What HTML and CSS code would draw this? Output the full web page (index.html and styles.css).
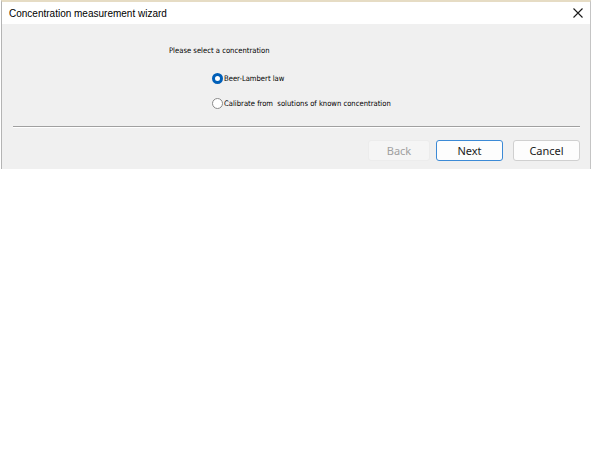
FILE: index.html
```html
<!DOCTYPE html>
<html>
<head>
<meta charset="utf-8">
<link rel="stylesheet" href="styles.css">
</head>
<body>
<div class="window">
  <div class="titlebar">
    <span class="title">Concentration measurement wizard</span>
    <span class="close">
      <svg width="10" height="10" viewBox="0 0 10 10"><path d="M0.5 0.5 L9.5 9.5 M9.5 0.5 L0.5 9.5" stroke="#1a1a1a" stroke-width="1.1" fill="none"/></svg>
    </span>
  </div>
  <div class="content">
    <div class="prompt">Please select a concentration</div>
    <div class="options">
      <label class="option"><span class="radio checked"></span><span class="label">Beer-Lambert law</span></label>
      <label class="option"><span class="radio"></span><span class="label">Calibrate from&nbsp; solutions of known concentration</span></label>
    </div>
    <div class="separator"></div>
    <div class="buttons">
      <button class="btn disabled">Back</button>
      <button class="btn default">Next</button>
      <button class="btn cancel">Cancel</button>
    </div>
  </div>
</div>
</body>
</html>
```

FILE: styles.css
```css
html, body {
  margin: 0;
  padding: 0;
  background: #ffffff;
}
.window {
  width: 588px;
  margin-left: 1px;
  border-top: 2px solid #e6dcc4;
  border-left: 1px solid #b4b4b4;
  border-right: 1px solid #c4c4c4;
  display: flex;
  flex-direction: column;
  font-family: "Noto Sans", "Open Sans", sans-serif;
}
.titlebar {
  height: 22px;
  background: #ffffff;
  display: flex;
  align-items: center;
  justify-content: space-between;
  padding-left: 7px;
  padding-right: 7px;
}
.title {
  font-family: "Liberation Sans", Arial, sans-serif;
  font-size: 10px;
  color: #000000;
}
.close {
  display: flex;
  width: 10px;
  height: 10px;
  margin-right: 0;
}
.content {
  background: #f0f0f0;
  height: 145px;
  display: flex;
  flex-direction: column;
  font-family: "DejaVu Sans Condensed", "Liberation Sans", sans-serif;
  font-size: 7.6px;
  color: #000000;
}
.prompt {
  margin-left: 167px;
  margin-top: 22px;
  height: 10px;
  line-height: 10px;
}
.options {
  margin-left: 210px;
  margin-top: 17px;
  display: flex;
  flex-direction: column;
  gap: 14px;
}
.option {
  display: flex;
  align-items: center;
  gap: 1px;
  height: 11px;
}
.radio {
  width: 9px;
  height: 9px;
  border: 1px solid #8a8a8a;
  border-radius: 50%;
  background: #ffffff;
  box-sizing: content-box;
}
.radio.checked {
  width: 5px;
  height: 5px;
  border: 3px solid #005fb8;
  background: #ffffff;
}
.label {
  line-height: 11px;
}
.separator {
  margin: 17px 10px 0 11px;
  height: 1px;
  background: #a0a0a0;
  border-bottom: 1px solid #ffffff;
}
.buttons {
  display: flex;
  justify-content: flex-end;
  gap: 6px;
  margin-top: 12px;
  margin-right: 10px;
}
.btn {
  font-family: "Noto Sans", "Open Sans", sans-serif;
  font-size: 11px;
  width: 62px;
  height: 21px;
  padding: 0;
  border-radius: 3px;
  background: #fdfdfd;
  border: 1px solid #d0d0d0;
  color: #1a1a1a;
}
.btn.disabled {
  background: #f5f5f5;
  border-color: #ececec;
  color: #a0a0a0;
}
.btn.default {
  width: 67px;
  border-color: #3c8ad6;
  margin-right: 4px;
}
.btn.cancel {
  width: 67px;
}
```
